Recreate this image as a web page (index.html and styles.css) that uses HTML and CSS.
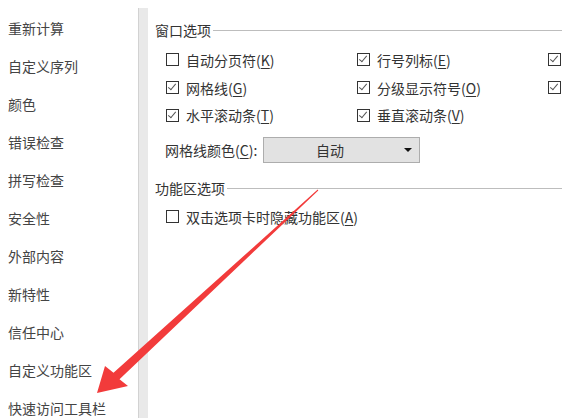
FILE: index.html
```html
<!DOCTYPE html>
<html lang="zh-CN">
  <head>
    <meta charset="UTF-8" />
    <meta name="viewport" content="width=device-width, initial-scale=1.0" />
    <title>Excel 选项</title>
    <link rel="stylesheet" href="styles.css">
  </head>
  <body>
    <div class="wrap">
      <ul class="side">
        <li>重新计算</li>
        <li>自定义序列</li>
        <li>颜色</li>
        <li>错误检查</li>
        <li>拼写检查</li>
        <li>安全性</li>
        <li>外部内容</li>
        <li>新特性</li>
        <li>信任中心</li>
        <li>自定义功能区</li>
        <li>快速访问工具栏</li>
      </ul>
      <div class="divider"></div>
      <div class="main">
        <div class="group_title"><span>窗口选项</span></div>
        <div class="grid">
          <label class="chk"><i class="box"></i>自动分页符(<u>K</u>)</label>
          <label class="chk"><i class="box on"></i>行号列标(<u>E</u>)</label>
          <label class="chk"><i class="box on"></i></label>
          <label class="chk"><i class="box on"></i>网格线(<u>G</u>)</label>
          <label class="chk"><i class="box on"></i>分级显示符号(<u>O</u>)</label>
          <label class="chk"><i class="box on"></i></label>
          <label class="chk"><i class="box on"></i>水平滚动条(<u>T</u>)</label>
          <label class="chk"><i class="box on"></i>垂直滚动条(<u>V</u>)</label>
        </div>
        <div class="color_row">
          <span class="color_label">网格线颜色(<u>C</u>):</span>
          <div class="select">
            <span class="select_text">自动</span>
            <span class="select_arrow"></span>
          </div>
        </div>
        <div class="group_title second"><span>功能区选项</span></div>
        <label class="chk single"><i class="box"></i>双击选项卡时隐藏功能区(<u>A</u>)</label>
      </div>
    </div>

    <svg class="pointer" width="570" height="418" viewBox="0 0 570 418">
      <polygon points="317.7,189.6 113.5,372.7 105,366 97,393 128,386 119.5,379.3 318.3,190.4" />
    </svg>
  </body>
</html>
```

FILE: styles.css
```css
html,
body {
  margin: 0;
  padding: 0;
}
body {
  width: 570px;
  height: 418px;
  overflow: hidden;
  background-color: white;
  font-family: "Noto Sans CJK SC", "Noto Sans", sans-serif;
  font-size: 14px;
  color: #333;
  position: relative;
}
.wrap {
  display: flex;
  height: 418px;
}
.side {
  flex-shrink: 0;
  list-style: none;
  margin: 0;
  padding: 9px 0 0 8px;
  width: 130px;
}
.side li {
  height: 38px;
  line-height: 38px;
  color: #444;
  white-space: nowrap;
}
.divider {
  flex-shrink: 0;
  margin-top: 8px;
  width: 9px;
  background-color: #e9e9e9;
  border-left: 1px solid #d2d2d2;
}
.main {
  flex: 1;
  min-width: 0;
  padding: 20px 8px 0 7px;
}
.group_title {
  display: flex;
  align-items: center;
  height: 20px;
  line-height: 20px;
  color: #333;
}
.group_title::after {
  content: "";
  flex: 1;
  height: 1px;
  margin-left: 2px;
  background-color: #bdbdbd;
}
.group_title.second {
  margin-top: 15px;
}
.grid {
  display: grid;
  grid-template-columns: 191px 191px auto;
  margin: 6px 0 0 11px;
}
.chk {
  display: flex;
  align-items: center;
  height: 27.7px;
  white-space: nowrap;
}
.chk.single {
  margin: 5px 0 0 11px;
}
.box {
  flex-shrink: 0;
  width: 11px;
  height: 11px;
  margin-right: 7px;
  border: 1px solid #333;
  background-color: white;
  position: relative;
}
.box.on::after {
  content: "";
  position: absolute;
  left: 3px;
  top: 0px;
  width: 3px;
  height: 7px;
  border-right: 1.2px solid #555;
  border-bottom: 1.2px solid #555;
  transform: rotate(40deg);
}
u {
  text-decoration: underline;
  text-underline-offset: 2px;
}
.color_row {
  display: flex;
  align-items: center;
  margin: 8px 0 0 10px;
  height: 26px;
}
.color_label {
  width: 98px;
  white-space: nowrap;
}
.select {
  display: flex;
  align-items: center;
  width: 155px;
  height: 24px;
  background-color: #e2e2e2;
  border: 1px solid #adadad;
}
.select_text {
  flex: 1;
  text-align: center;
  line-height: 24px;
}
.select_arrow {
  width: 23px;
  display: flex;
  justify-content: center;
}
.select_arrow::before {
  content: "";
  border-left: 4px solid transparent;
  border-right: 4px solid transparent;
  border-top: 4px solid #111;
}
.pointer {
  position: absolute;
  left: 0;
  top: 0;
  pointer-events: none;
}
.pointer polygon {
  fill: #f23b3b;
}
```
